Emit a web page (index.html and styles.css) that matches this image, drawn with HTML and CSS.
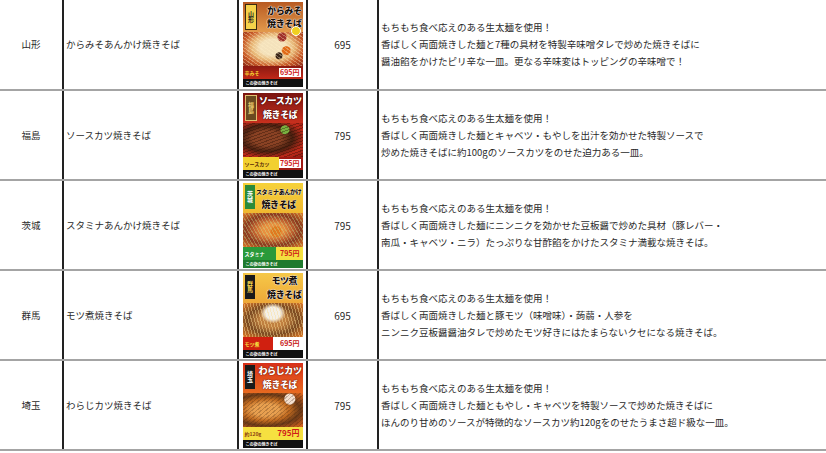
FILE: index.html
```html
<!DOCTYPE html>
<html lang="ja">
<head>
<meta charset="utf-8">
<link rel="stylesheet" href="styles.css">
</head>
<body>
<table class="menu">
  <colgroup>
    <col class="c-pref"><col class="c-name"><col class="c-img"><col class="c-price"><col class="c-desc">
  </colgroup>
  <tbody>
    <tr>
      <td class="pref">山形</td>
      <td class="name">からみそあんかけ焼きそば</td>
      <td class="img">
        <div class="poster p1">
          <div class="top"><span class="tag">山形</span><span class="title">からみそ<br>焼きそば</span><span class="badge"></span></div>
          <div class="food"></div>
          <div class="band"><span class="sub">辛みそ</span><span class="yen">695円</span></div>
          <div class="foot">この街の焼きそば</div>
        </div>
      </td>
      <td class="price">695</td>
      <td class="desc">もちもち食べ応えのある生太麺を使用！<br>香ばしく両面焼きした麺と7種の具材を特製辛味噌タレで炒めた焼きそばに<br>醤油餡をかけたピリ辛な一皿。更なる辛味変はトッピングの辛味噌で！</td>
    </tr>
    <tr>
      <td class="pref">福島</td>
      <td class="name">ソースカツ焼きそば</td>
      <td class="img">
        <div class="poster p2">
          <div class="top"><span class="tag">福島</span><span class="title">ソースカツ<br>焼きそば</span></div>
          <div class="food"></div>
          <div class="band"><span class="sub">ソースカツ</span><span class="yen">795円</span></div>
          <div class="foot">この街の焼きそば</div>
        </div>
      </td>
      <td class="price">795</td>
      <td class="desc">もちもち食べ応えのある生太麺を使用！<br>香ばしく両面焼きした麺とキャベツ・もやしを出汁を効かせた特製ソースで<br>炒めた焼きそばに約100gのソースカツをのせた迫力ある一皿。</td>
    </tr>
    <tr>
      <td class="pref">茨城</td>
      <td class="name">スタミナあんかけ焼きそば</td>
      <td class="img">
        <div class="poster p3">
          <div class="top"><span class="tag">茨城</span><span class="title"><small>スタミナあんかけ</small><br>焼きそば</span></div>
          <div class="food"></div>
          <div class="band"><span class="sub">スタミナ</span><span class="yen">795円</span></div>
          <div class="foot">この街の焼きそば</div>
        </div>
      </td>
      <td class="price">795</td>
      <td class="desc">もちもち食べ応えのある生太麺を使用！<br>香ばしく両面焼きした麺にニンニクを効かせた豆板醤で炒めた具材（豚レバー・<br>南瓜・キャベツ・ニラ）たっぷりな甘酢餡をかけたスタミナ満載な焼きそば。</td>
    </tr>
    <tr>
      <td class="pref">群馬</td>
      <td class="name">モツ煮焼きそば</td>
      <td class="img">
        <div class="poster p4">
          <div class="top"><span class="tag">群馬</span><span class="title">モツ煮<br>焼きそば</span></div>
          <div class="food"></div>
          <div class="band"><span class="sub">モツ煮</span><span class="yen">695円</span></div>
          <div class="foot">この街の焼きそば</div>
        </div>
      </td>
      <td class="price">695</td>
      <td class="desc">もちもち食べ応えのある生太麺を使用！<br>香ばしく両面焼きした麺と豚モツ（味噌味）・蒟蒻・人参を<br>ニンニク豆板醤醤油タレで炒めたモツ好きにはたまらないクセになる焼きそば。</td>
    </tr>
    <tr>
      <td class="pref">埼玉</td>
      <td class="name">わらじカツ焼きそば</td>
      <td class="img">
        <div class="poster p5">
          <div class="top"><span class="tag">埼玉</span><span class="title">わらじカツ<br>焼きそば</span></div>
          <div class="food"></div>
          <div class="band"><span class="sub">約120g</span><span class="yen">795円</span></div>
          <div class="foot">この街の焼きそば</div>
        </div>
      </td>
      <td class="price">795</td>
      <td class="desc">もちもち食べ応えのある生太麺を使用！<br>香ばしく両面焼きした麺ともやし・キャベツを特製ソースで炒めた焼きそばに<br>ほんのり甘めのソースが特徴的なソースカツ約120gをのせたうまさ超ド級な一皿。</td>
    </tr>
  </tbody>
</table>
</body>
</html>
```

FILE: styles.css
```css
html, body {
  margin: 0;
  padding: 0;
  background: #fff;
}
body {
  font-family: "Noto Sans CJK JP", "Noto Sans", sans-serif;
  color: #2a2a2a;
  font-size: 9.5px;
}
.menu {
  width: 826px;
  table-layout: fixed;
  border-collapse: collapse;
}
.c-pref { width: 63px; }
.c-name { width: 175px; }
.c-img { width: 69px; }
.c-price { width: 71px; }
.c-desc { width: 448px; }
.menu tr { height: 90px; }
.menu td {
  padding: 0;
  vertical-align: middle;
  border-bottom: 2px solid #a4a4a4;
  border-right: 2px solid #222;
  line-height: 17px;
  white-space: nowrap;
  overflow: hidden;
}
.menu td:last-child { border-right: none; }
.pref { text-align: center; }
.name { padding-left: 2px !important; }
.price { text-align: center; font-size: 10px; }
.desc { padding-left: 2px !important; }
.img { text-align: center; }

/* posters */
.poster {
  width: 60px;
  height: 85px;
  margin: 0 auto;
  display: flex;
  flex-direction: column;
  overflow: hidden;
  line-height: 1;
  font-weight: bold;
}
.poster .top {
  height: 30px;
  position: relative;
  display: flex;
  align-items: center;
  justify-content: flex-end;
  padding-right: 1px;
}
.poster .tag {
  position: absolute;
  left: 2px;
  top: 2px;
  width: 10px;
  height: 24px;
  font-size: 6px;
  writing-mode: vertical-rl;
  display: flex;
  align-items: center;
  justify-content: center;
  line-height: 1;
}
.poster .title {
  font-size: 9px;
  text-align: center;
  letter-spacing: -0.4px;
  line-height: 13.5px;
  font-weight: 900;
}
.poster .title small {
  font-size: 6px;
  letter-spacing: -0.3px;
}
.poster .badge {
  position: absolute;
  right: 2px;
  bottom: -4px;
  width: 8px;
  height: 8px;
  border-radius: 50%;
  background: #f0d020;
  border: 1px solid #fff;
}
.poster .food {
  flex: 1;
}
.poster .band {
  height: 13px;
  display: flex;
  align-items: center;
  justify-content: space-between;
  padding: 0 2px;
  font-size: 5px;
}
.poster .band .yen {
  font-size: 7px;
  padding: 1px 1px;
}
.poster .foot {
  height: 8px;
  background: #111;
  color: #fff;
  font-size: 4px;
  text-align: left;
  padding-left: 3px;
  display: flex;
  align-items: center;
}

/* 山形 */
.p1 { background: #d9843a; }
.p1 .top { background: linear-gradient(180deg, #b85a22, #e39a4c); }
.p1 .tag { background: #f5d24a; border: 1px solid #3a2a10; color: #222; }
.p1 .title { color: #1a1008; text-shadow: 0 0 1px #fff, 0 0 1px #fff, 0 0 1px #fff; }
.p1 .food {
  background:
    repeating-linear-gradient(35deg, rgba(255,240,200,.35) 0 1px, transparent 1px 3px),
    radial-gradient(circle at 65% 15%, #a0302a 0 4px, transparent 5px),
    radial-gradient(circle at 72% 55%, #e06a18 0 4px, transparent 5px),
    radial-gradient(circle at 60% 70%, #3a2418 0 3px, transparent 4px),
    radial-gradient(ellipse at 50% 45%, #f4e2bc 0 30%, #e8b878 50%, #c85a28 72%, #8a2818 100%);
}
.p1 .band { background: linear-gradient(180deg, #8a1a12, #c02818); color: #f6d030; }
.p1 .band .yen { background: #fff; color: #d01a1a; }

/* 福島 */
.p2 { background: #8a1a12; }
.p2 .top { background: linear-gradient(180deg, #7a1410, #c8301e); }
.p2 .tag { background: #6a4a20; color: #f0d070; border: 1px solid #e0c070; }
.p2 .title { color: #fff; text-shadow: 0 0 1px #400, 0 0 1px #400, 0 0 1px #400; }
.p2 .food {
  background:
    repeating-linear-gradient(-20deg, rgba(30,10,0,.35) 0 1px, transparent 1px 3px),
    radial-gradient(circle at 70% 20%, #7ab040 0 4px, transparent 5px),
    radial-gradient(ellipse at 40% 45%, #8a4224 0 28%, #4a2010 50%, #c02a1a 75%, #8a1810 100%);
}
.p2 .band { background: linear-gradient(90deg, #f2d030 0 60%, #a01a14 60%); color: #5a2a08; }
.p2 .band .yen { background: #fff; color: #d01a1a; }

/* 茨城 */
.p3 { background: #e6a030; }
.p3 .top { background: linear-gradient(180deg, #f6d23a, #f0b830); }
.p3 .tag { background: #2a8a3a; color: #fff; }
.p3 .title { color: #1a1008; text-shadow: 0 0 1px #fff, 0 0 1px #fff; }
.p3 .food {
  background:
    repeating-linear-gradient(60deg, rgba(200,230,150,.35) 0 1px, transparent 1px 3px),
    radial-gradient(circle at 55% 55%, #e07a20 0 5px, transparent 6px),
    radial-gradient(ellipse at 50% 50%, #e89040 0 25%, #c06030 45%, #8a3a20 65%, #e07a28 100%);
}
.p3 .band { background: linear-gradient(90deg, #2a9a3a 0 55%, #f4e040 55%); color: #fff; }
.p3 .band .yen { color: #d01a1a; }
.p3 .foot { background: #1f7a2e; }

/* 群馬 */
.p4 { background: #d88a30; }
.p4 .top { background: linear-gradient(180deg, #f6c848, #eea838); }
.p4 .tag { background: #1a1a1a; color: #f5d24a; }
.p4 .title { color: #1a1008; text-shadow: 0 0 1px #fff, 0 0 1px #fff, 0 0 1px #fff; }
.p4 .food {
  background:
    repeating-linear-gradient(75deg, rgba(250,220,150,.45) 0 1px, transparent 1px 3px),
    radial-gradient(ellipse at 50% 30%, #f4f0e8 0 18%, transparent 30%),
    radial-gradient(ellipse at 50% 50%, #c08040 0 30%, #7a4a22 60%, #e07a28 100%);
}
.p4 .band { background: linear-gradient(90deg, #d02010 0 50%, #fff 50%); color: #f6e040; }
.p4 .band .yen { color: #c81a1a; }

/* 埼玉 */
.p5 { background: #e07a20; }
.p5 .top { background: linear-gradient(180deg, #d8301a, #e86a20); }
.p5 .tag { background: #1a1a1a; color: #fff; }
.p5 .title { color: #fff; text-shadow: 0 0 1px #7a1a00, 0 0 1px #7a1a00, 0 0 1px #7a1a00; }
.p5 .food {
  background:
    repeating-linear-gradient(-40deg, rgba(60,30,10,.25) 0 1px, transparent 1px 3px),
    radial-gradient(circle at 78% 18%, #f4e0d0 0 5px, transparent 6px),
    radial-gradient(ellipse at 38% 50%, #e8a050 0 25%, #c06a20 45%, #6a3a18 65%, #e86a20 100%);
}
.p5 .band { background: #f6e040; color: #8a3a10; }
.p5 .band .yen { color: #d01a1a; font-size: 8px; }
```
